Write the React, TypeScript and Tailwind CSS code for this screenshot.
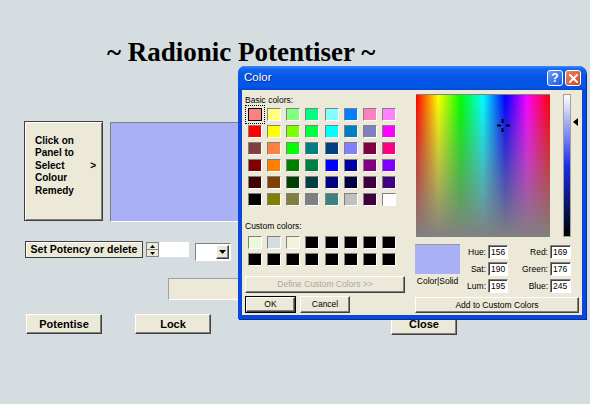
import React from "react";

const basic: string[][] = [
  ["bg-[#ff8080]", "bg-[#ffff80]", "bg-[#80ff80]", "bg-[#00ff80]", "bg-[#80ffff]", "bg-[#0080ff]", "bg-[#ff80c0]", "bg-[#ff80ff]"],
  ["bg-[#ff0000]", "bg-[#ffff00]", "bg-[#80ff00]", "bg-[#00ff40]", "bg-[#00ffff]", "bg-[#0080c0]", "bg-[#8080c0]", "bg-[#ff00ff]"],
  ["bg-[#804040]", "bg-[#ff8040]", "bg-[#00ff00]", "bg-[#008080]", "bg-[#004080]", "bg-[#8080ff]", "bg-[#800040]", "bg-[#ff0080]"],
  ["bg-[#800000]", "bg-[#ff8000]", "bg-[#008000]", "bg-[#008040]", "bg-[#0000ff]", "bg-[#0000a0]", "bg-[#800080]", "bg-[#8000ff]"],
  ["bg-[#400000]", "bg-[#804000]", "bg-[#004000]", "bg-[#004040]", "bg-[#000080]", "bg-[#000040]", "bg-[#400040]", "bg-[#400080]"],
  ["bg-[#000000]", "bg-[#808000]", "bg-[#808040]", "bg-[#808080]", "bg-[#408080]", "bg-[#c0c0c0]", "bg-[#400040]", "bg-[#ffffff]"],
];

const custom: string[][] = [
  ["bg-[#eafad6]", "bg-[#d6dde0]", "bg-[#f3f1dc]", "bg-black", "bg-black", "bg-black", "bg-black", "bg-black"],
  ["bg-black", "bg-black", "bg-black", "bg-black", "bg-black", "bg-black", "bg-black", "bg-black"],
];

const raised =
  "bg-[#ece9d8] border border-t-white border-l-white border-b-[#404040] border-r-[#404040] shadow-[inset_-1px_-1px_0_#808080]";
const sunken =
  "border border-t-[#808080] border-l-[#808080] border-b-white border-r-white shadow-[inset_1px_1px_0_#404040]";

function Swatch({ color, selected }: { color: string; selected?: boolean }) {
  return (
    <div
      className={
        "w-[14px] h-[13px] " +
        (selected
          ? "border border-black outline outline-1 outline-dotted outline-black outline-offset-[2px]"
          : sunken)
      }
    >
      <div className={"w-full h-full " + color} />
    </div>
  );
}

function SwatchGrid({ rows, first }: { rows: string[][]; first?: boolean }) {
  return (
    <div className="grid grid-cols-[repeat(8,14px)] gap-x-[5.14px] gap-y-[4px]">
      {rows.map((r, i) =>
        r.map((c, j) => <Swatch key={i + "-" + j} color={c} selected={first && i === 0 && j === 0} />)
      )}
    </div>
  );
}

function ValueBox({ v, w }: { v: string; w: string }) {
  return (
    <div className={"h-[14px] bg-white pl-[2px] text-[8.5px] leading-[12px] text-black " + w + " " + sunken}>{v}</div>
  );
}

export default function App() {
  return (
    <div className="relative w-[590px] h-[404px] overflow-hidden bg-[#d6dde0] font-['Liberation_Sans',Arial,sans-serif] text-black">
      {/* Title */}
      <div className="pt-[39px] pl-[107px]">
        <h1 className="font-['Liberation_Serif','Times_New_Roman',serif] text-[27px] font-bold leading-none whitespace-nowrap">
          ~ Radionic Potentiser ~
        </h1>
      </div>

      {/* Row 1: panel + colour */}
      <div className="mt-[55px] flex items-start pl-[24px] gap-[7px]">
        <div className="w-[79px] h-[100px] bg-[#ece9d8] border border-[#404040] shadow-[inset_1px_1px_0_#fff,inset_-1px_-1px_0_#808080] pt-[13px] pl-[10px] pr-[6px] text-[10px] font-bold leading-[12.4px]">
          <div>Click on</div>
          <div>Panel to</div>
          <div className="flex justify-between">
            <span>Select</span>
            <span>&gt;</span>
          </div>
          <div>Colour</div>
          <div>Remedy</div>
        </div>
        <div className="mt-[1px] w-[265px] h-[100px] bg-[#a9b0f5] border border-t-[#808080] border-l-[#808080] border-b-white border-r-white" />
      </div>

      {/* Row 2: potency */}
      <div className="mt-[19px] flex items-start pl-[25px]">
        <div className="w-[118px] h-[17px] bg-[#ece9d8] border border-[#404040] shadow-[inset_1px_1px_0_#fff] flex items-center justify-center text-[10.5px] font-bold">
          Set Potency or delete
        </div>
        <div className="ml-[3px] mt-[1px] flex">
          <div className="w-[13px] h-[15px] flex flex-col border border-[#808080]">
            <div className="flex-1 bg-[#ece9d8] border-b border-[#808080] flex items-center justify-center">
              <svg width="5" height="3" viewBox="0 0 5 3"><path d="M2.5 0 L5 3 L0 3 Z" fill="#000" /></svg>
            </div>
            <div className="flex-1 bg-[#ece9d8] flex items-center justify-center">
              <svg width="5" height="3" viewBox="0 0 5 3"><path d="M0 0 L5 0 L2.5 3 Z" fill="#000" /></svg>
            </div>
          </div>
          <div className="w-[30px] h-[15px] bg-white" />
        </div>
        <div className="ml-[6px] mt-[2px] w-[36px] h-[18px] bg-white border border-t-[#808080] border-l-[#808080] border-b-white border-r-white flex justify-end p-[1px]">
          <div className={"w-[13px] h-full flex items-center justify-center " + raised}>
            <svg width="7" height="4" viewBox="0 0 7 4"><path d="M0 0 L7 0 L3.5 4 Z" fill="#000" /></svg>
          </div>
        </div>
      </div>

      {/* Row 3: empty field */}
      <div className="mt-[17px] pl-[168px]">
        <div className="w-[210px] h-[22px] bg-[#ece9d8] border border-t-[#a0a0a0] border-l-[#a0a0a0] border-b-white border-r-white" />
      </div>

      {/* Row 4: buttons */}
      <div className="mt-[14px] flex items-start pl-[26px] text-[11px] font-bold">
        <div className={"w-[76px] h-[20px] flex items-center justify-center " + raised}>Potentise</div>
        <div className={"ml-[33px] w-[76px] h-[20px] flex items-center justify-center " + raised}>Lock</div>
        <div className={"ml-[180px] w-[66px] h-[21px] flex items-center justify-center " + raised}>Close</div>
      </div>

      {/* Colour dialog */}
      <div className="absolute left-[238px] top-[66px] w-[348px] h-[253px] flex flex-col rounded-t-[7px] bg-[#0a48dc] shadow-[1px_1px_0_#0030a0]">
        <div className="h-[24px] shrink-0 rounded-t-[7px] bg-[linear-gradient(to_bottom,#3f8cf7_0%,#1466f0_12%,#0455e6_45%,#0258ea_85%,#0847c8_100%)] flex items-center pl-[6px] pr-[5px]">
          <span className="text-white text-[11.5px] leading-none [text-shadow:1px_1px_0_#0a2a8a]">Color</span>
          <div className="ml-auto flex gap-[2px]">
            <div className="w-[16px] h-[16px] rounded-[3px] border border-white bg-[linear-gradient(135deg,#6a9cf8,#2058e0)] flex items-center justify-center text-white text-[12px] font-bold leading-none">
              ?
            </div>
            <div className="w-[16px] h-[16px] rounded-[3px] border border-white bg-[linear-gradient(135deg,#f0885e,#d2421e)] flex items-center justify-center">
              <svg width="9" height="9" viewBox="0 0 9 9">
                <path d="M1 1 L8 8 M8 1 L1 8" stroke="#fff" strokeWidth="2" strokeLinecap="square" />
              </svg>
            </div>
          </div>
        </div>
        <div className="flex-1 mx-[4px] mb-[4px] bg-[#ece9d8] flex text-[8.5px] leading-[13px]">
          {/* Left column */}
          <div className="w-[166px] pl-[3px] flex flex-col">
            <div className="mt-[4px]">Basic colors:</div>
            <div className="mt-[1px] ml-[3px]">
              <SwatchGrid rows={basic} first />
            </div>
            <div className="mt-[14px]">Custom colors:</div>
            <div className="mt-[3px] ml-[3px]">
              <SwatchGrid rows={custom} />
            </div>
            <div className={"mt-[10px] w-[160px] h-[17px] flex items-center justify-center text-[#aca899] " + raised}>
              Define Custom Colors &gt;&gt;
            </div>
            <div className="mt-[3px] flex gap-[4px]">
              <div className="w-[51px] h-[17px] border border-black">
                <div className={"w-full h-full flex items-center justify-center " + raised}>OK</div>
              </div>
              <div className={"w-[50px] h-[17px] flex items-center justify-center " + raised}>Cancel</div>
            </div>
          </div>
          {/* Right column */}
          <div className="ml-[7px] w-[164px] flex flex-col">
            <div className="mt-[4px] flex items-start">
              <div className="relative ml-[1px] w-[134px] h-[143px] border-t border-[#808080] bg-[linear-gradient(to_bottom,rgba(128,128,128,0),#808080),linear-gradient(to_right,#ff0000,#ffff00,#00ff00,#00ffff,#0000ff,#ff00ff,#ff0000)]">
                <svg className="absolute left-[81px] top-[24px]" width="13" height="13" viewBox="0 0 13 13">
                  <path d="M5.5 0 V4 M5.5 9 V13 M0 6.5 H4 M9 6.5 H13" stroke="#000" strokeWidth="2" />
                </svg>
              </div>
              <div className="relative ml-[13px] w-[8px] h-[143px] border border-[#a0a0a0] bg-[linear-gradient(to_bottom,#ffffff,#1b2fe4_50%,#000000)]">
                <svg className="absolute left-[9px] top-[23px]" width="5" height="8" viewBox="0 0 5 8">
                  <path d="M0 4 L5 0 L5 8 Z" fill="#000" />
                </svg>
              </div>
            </div>
            <div className="mt-[7px] flex">
              <div className="w-[45px] flex flex-col items-center">
                <div className="w-[45px] h-[30px] bg-[#a9b0f5] border-t border-[#9a9a9a]" />
                <div className="mt-[1px] whitespace-nowrap">Color|Solid</div>
              </div>
              <div className="mt-[1px] flex flex-col gap-[3px]">
                {[
                  ["Hue:", "156", "Red:", "169"],
                  ["Sat:", "190", "Green:", "176"],
                  ["Lum:", "195", "Blue:", "245"],
                ].map(([a, b, c, d]) => (
                  <div key={a} className="flex items-center h-[14px]">
                    <div className="w-[26px] text-right">{a}</div>
                    <div className="ml-[2px]">
                      <ValueBox v={b} w="w-[20px]" />
                    </div>
                    <div className="w-[40px] text-right">{c}</div>
                    <div className="ml-[2px]">
                      <ValueBox v={d} w="w-[21px]" />
                    </div>
                  </div>
                ))}
              </div>
            </div>
            <div className={"mt-[4px] w-[164px] h-[16px] flex items-center justify-center " + raised}>
              Add to Custom Colors
            </div>
          </div>
        </div>
      </div>
    </div>
  );
}
